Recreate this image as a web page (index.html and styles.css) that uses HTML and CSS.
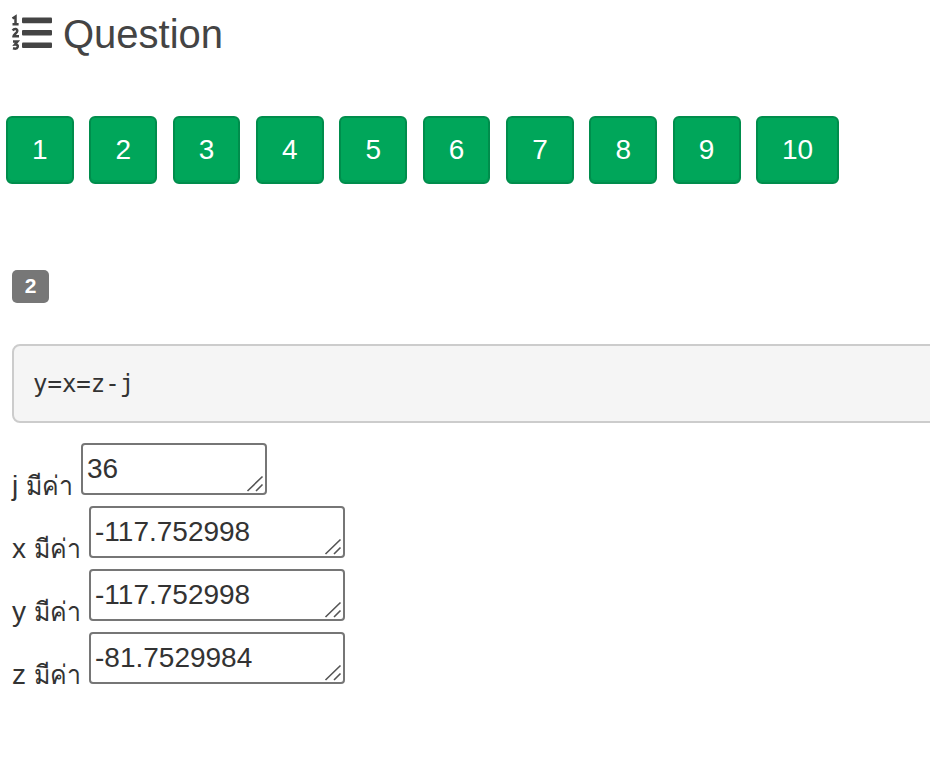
FILE: index.html
```
<!DOCTYPE html>
<html lang="th">
<head>
<meta charset="utf-8">
<title>Question</title>
<link rel="stylesheet" href="styles.css">
</head>
<body>
<header class="heading">
<svg class="list-icon" viewBox="0 0 42 38" aria-hidden="true"><g fill="#444"><rect x="11" y="3.6" width="30" height="5.600" rx="1"/><rect x="11" y="16" width="30" height="5.600" rx="1"/><rect x="11" y="28.500" width="30" height="5.600" rx="1"/></g><g fill="none" stroke="#444" stroke-width="2.500"><path d="M1.500 4.500L4.500 2.500V10M1.500 10.200H7.600M1.700 16.500C3 14.500 6.500 14.500 6.300 17C6.200 19 2.500 20.500 2.500 22.300H8M2 27.400H6.500L4 30.500C8.500 30.200 7.500 36 2 34.300"/></g></svg>
<h1>Question</h1>
</header>
<nav class="pages">
<button>1</button><button>2</button><button>3</button><button>4</button><button>5</button><button>6</button><button>7</button><button>8</button><button>9</button><button class="wide">10</button>
</nav>
<main>
<span class="label">2</span>
<pre>y=x=z-j</pre>
<div class="row"><label class="name">j <span class="thai">มีค่า</span></label><div class="field small">36<svg class="grip" viewBox="0 0 18 18"><path d="M1.500 16L16.500 1.500M10 16L16.500 9.500"/></svg></div></div>
<div class="row"><label class="name">x <span class="thai">มีค่า</span></label><div class="field">-117.752998<svg class="grip" viewBox="0 0 18 18"><path d="M1.500 16L16.500 1.500M10 16L16.500 9.500"/></svg></div></div>
<div class="row"><label class="name">y <span class="thai">มีค่า</span></label><div class="field">-117.752998<svg class="grip" viewBox="0 0 18 18"><path d="M1.500 16L16.500 1.500M10 16L16.500 9.500"/></svg></div></div>
<div class="row"><label class="name">z <span class="thai">มีค่า</span></label><div class="field">-81.7529984<svg class="grip" viewBox="0 0 18 18"><path d="M1.500 16L16.500 1.500M10 16L16.500 9.500"/></svg></div></div>
</main>
</body>
</html>
```
FILE: styles.css
```
*{box-sizing:border-box}
body{margin:0;background:#fff;color:#333;font-family:"Liberation Sans",Arial,sans-serif;font-size:28px;overflow:hidden}
.heading{display:flex;height:116px;padding:14px 0 0 11px;color:#444}
.list-icon{width:42px;height:38px;margin-right:10px}
h1{margin:0;font-size:40px;font-weight:400;line-height:41px}
.pages{display:flex;gap:15.6px;padding-left:6px}
.pages button{width:67.75px;height:68px;padding:0;border:2px solid #008d4c;border-radius:6px;background:#00a65a;color:#fff;font:28px "Liberation Sans",Arial,sans-serif;box-shadow:inset 0 -2px 0 rgba(0,0,0,.05)}
.pages .wide{width:83px}
main{padding:86px 0 0 12px}
.label{display:block;width:37px;height:33px;border-radius:5px;background:#777;color:#fff;font-size:21px;font-weight:700;line-height:32px;text-align:center}
pre{height:79px;width:940px;margin:41px 0 20px;padding:18px 19px;border:2px solid #ccc;border-radius:8px;background:#f5f5f5;font:24px/40px "DejaVu Sans Mono",monospace;color:#333}
.row{display:flex;height:63px}
.name{width:69px;padding-top:25px;line-height:36px;white-space:nowrap}
.row + .row .name{width:77px}
.thai{display:inline-block;font-size:26.5px;line-height:1;transform:scaleX(.94);transform-origin:left}
.field{position:relative;width:256px;height:52px;border:2px solid #767676;border-radius:4px;padding-left:4px;line-height:48px}
.small{width:186px}
.grip{position:absolute;right:1px;bottom:0;width:18px;height:18px;fill:none;stroke:#555;stroke-width:1.6}
```
